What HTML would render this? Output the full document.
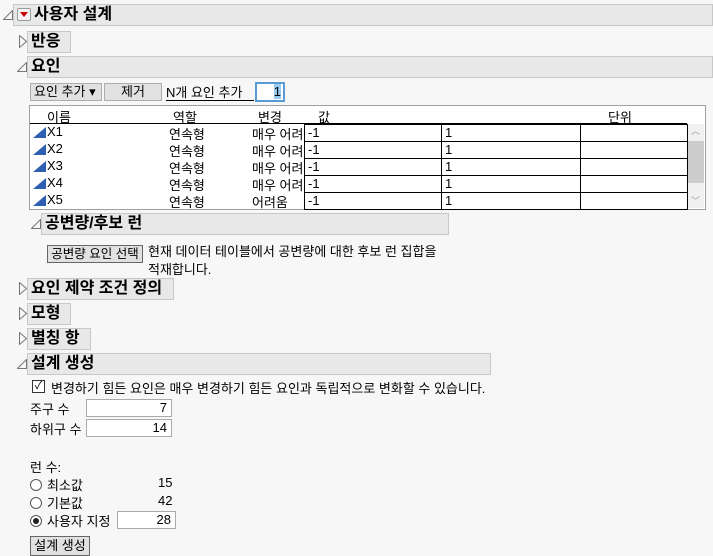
<!DOCTYPE html>
<html><head><meta charset="utf-8"><style>
*{margin:0;padding:0;box-sizing:border-box}
body{width:713px;height:556px;background:#f7f7f7;font-family:"Liberation Sans","Noto Sans CJK KR","NanumGothic",sans-serif;font-size:13px;color:#000;position:relative;overflow:hidden}
.a{position:absolute;white-space:nowrap}
.bar{position:absolute;background:#e8e8e8;border:1px solid #c8c8c8;font-weight:bold;font-size:16px;padding-left:3px;line-height:19px}
.tri{position:absolute}
.btn{position:absolute;background:#e1e1e1;border:1px solid #adadad;text-align:center;line-height:16px}
.inp{position:absolute;background:#fff;border:1px solid #aaa;text-align:right;padding-right:4px;line-height:15px}
.row{position:absolute;left:30px;width:657px;height:17px}
.cell{position:absolute;top:0;height:18px;border:1px solid #000;background:#fff;padding-left:3px;line-height:16px}
.radio{position:absolute;width:12px;height:12px;border:1px solid #555;border-radius:50%;background:#fff}
</style></head><body>
<svg class="tri" style="left:3px;top:10px" width="10" height="10"><polygon points="0.5,9.5 9.5,9.5 9.5,0.5" fill="none" stroke="#777"/></svg>
<div class="bar" style="left:13px;top:4px;width:700px;height:22px;padding-left:20px">사용자 설계</div>
<div class="a" style="left:17px;top:8px;width:14px;height:13px;border:1px solid #999;background:#f4f4f4;border-radius:2px"></div>
<div class="a" style="left:20px;top:12px;width:0;height:0;border-left:4px solid transparent;border-right:4px solid transparent;border-top:5px solid #c00"></div>

<svg class="tri" style="left:19px;top:35px" width="8" height="13"><polygon points="0.5,0.5 7.5,6.5 0.5,12.5" fill="none" stroke="#777"/></svg>
<div class="bar" style="left:27px;top:31px;width:44px;height:22px">반응</div>

<svg class="tri" style="left:17px;top:62px" width="10" height="10"><polygon points="0.5,9.5 9.5,9.5 9.5,0.5" fill="none" stroke="#777"/></svg>
<div class="bar" style="left:27px;top:56px;width:686px;height:22px">요인</div>

<div class="btn" style="left:30px;top:83px;width:72px;height:18px;text-align:left;padding-left:3px">요인 추가 ▾</div>
<div class="btn" style="left:104px;top:83px;width:58px;height:18px">제거</div>
<div class="a" style="left:166px;top:85px;width:88px;border-bottom:1px solid #000;line-height:15px">N개 요인 추가</div>
<div class="a" style="left:255px;top:82px;width:30px;height:20px;border:2px solid #5b9bd5;background:#fff;text-align:right;padding-right:2px;line-height:16px"><span style="background:#99c9ef">1</span></div>

<div class="a" style="left:29px;top:105px;width:677px;height:105px;border:1px solid #a0a0a0;background:#fff"></div>
<div class="a" style="left:30px;top:123px;width:657px;height:1px;background:#000"></div>
<div class="a" style="left:47px;top:107px">이름</div>
<div class="a" style="left:173px;top:107px">역할</div>
<div class="a" style="left:258px;top:107px">변경</div>
<div class="a" style="left:318px;top:107px">값</div>
<div class="a" style="left:608px;top:107px">단위</div>
<div class="a" style="left:687px;top:124px;width:17px;height:84px;background:#f0f0f0"></div>
<div class="a" style="left:688px;top:141px;width:16px;height:42px;background:#cdcdcd"></div>
<div class="a" style="left:691px;top:124px;font-size:9px;color:#999">︿</div>
<div class="a" style="left:691px;top:194px;font-size:9px;color:#999">﹀</div>

<div class="row" style="top:124px"><svg class="a" style="left:3px;top:3px" width="13" height="11"><polygon points="0,11 13,0 13,11" fill="#2f5fb0"/></svg><span class="a" style="left:17px;top:0px">X1</span><span class="a" style="left:139px;top:0px">연속형</span><span class="a" style="left:222px;top:0px">매우 어려</span><div class="cell" style="left:274px;width:138px">-1</div><div class="cell" style="left:411px;width:140px">1</div><div class="cell" style="left:550px;width:108px"></div></div>
<div class="row" style="top:141px"><svg class="a" style="left:3px;top:3px" width="13" height="11"><polygon points="0,11 13,0 13,11" fill="#2f5fb0"/></svg><span class="a" style="left:17px;top:0px">X2</span><span class="a" style="left:139px;top:0px">연속형</span><span class="a" style="left:222px;top:0px">매우 어려</span><div class="cell" style="left:274px;width:138px">-1</div><div class="cell" style="left:411px;width:140px">1</div><div class="cell" style="left:550px;width:108px"></div></div>
<div class="row" style="top:158px"><svg class="a" style="left:3px;top:3px" width="13" height="11"><polygon points="0,11 13,0 13,11" fill="#2f5fb0"/></svg><span class="a" style="left:17px;top:0px">X3</span><span class="a" style="left:139px;top:0px">연속형</span><span class="a" style="left:222px;top:0px">매우 어려</span><div class="cell" style="left:274px;width:138px">-1</div><div class="cell" style="left:411px;width:140px">1</div><div class="cell" style="left:550px;width:108px"></div></div>
<div class="row" style="top:175px"><svg class="a" style="left:3px;top:3px" width="13" height="11"><polygon points="0,11 13,0 13,11" fill="#2f5fb0"/></svg><span class="a" style="left:17px;top:0px">X4</span><span class="a" style="left:139px;top:0px">연속형</span><span class="a" style="left:222px;top:0px">매우 어려</span><div class="cell" style="left:274px;width:138px">-1</div><div class="cell" style="left:411px;width:140px">1</div><div class="cell" style="left:550px;width:108px"></div></div>
<div class="row" style="top:192px"><svg class="a" style="left:3px;top:3px" width="13" height="11"><polygon points="0,11 13,0 13,11" fill="#2f5fb0"/></svg><span class="a" style="left:17px;top:0px">X5</span><span class="a" style="left:139px;top:0px">연속형</span><span class="a" style="left:222px;top:0px">어려움</span><div class="cell" style="left:274px;width:138px">-1</div><div class="cell" style="left:411px;width:140px">1</div><div class="cell" style="left:550px;width:108px"></div></div>

<svg class="tri" style="left:31px;top:219px" width="10" height="10"><polygon points="0.5,9.5 9.5,9.5 9.5,0.5" fill="none" stroke="#777"/></svg>
<div class="bar" style="left:41px;top:213px;width:408px;height:22px">공변량/후보 런</div>
<div class="btn" style="left:47px;top:245px;width:96px;height:18px;border-color:#666;font-size:12.5px">공변량 요인 선택</div>
<div class="a" style="left:148px;top:243px;line-height:18px">현재 데이터 테이블에서 공변량에 대한 후보 런 집합을<br>적재합니다.</div>

<svg class="tri" style="left:19px;top:282px" width="8" height="13"><polygon points="0.5,0.5 7.5,6.5 0.5,12.5" fill="none" stroke="#777"/></svg>
<div class="bar" style="left:27px;top:278px;width:147px;height:22px">요인 제약 조건 정의</div>
<svg class="tri" style="left:19px;top:307px" width="8" height="13"><polygon points="0.5,0.5 7.5,6.5 0.5,12.5" fill="none" stroke="#777"/></svg>
<div class="bar" style="left:27px;top:303px;width:44px;height:22px">모형</div>
<svg class="tri" style="left:19px;top:332px" width="8" height="13"><polygon points="0.5,0.5 7.5,6.5 0.5,12.5" fill="none" stroke="#777"/></svg>
<div class="bar" style="left:27px;top:328px;width:64px;height:22px">별칭 항</div>
<svg class="tri" style="left:17px;top:359px" width="10" height="10"><polygon points="0.5,9.5 9.5,9.5 9.5,0.5" fill="none" stroke="#777"/></svg>
<div class="bar" style="left:27px;top:353px;width:464px;height:22px">설계 생성</div>

<div class="a" style="left:32px;top:380px;width:13px;height:13px;border:1px solid #333;background:#fff;font-size:11px;line-height:11px;text-align:center">✓</div>
<div class="a" style="left:51px;top:378px">변경하기 힘든 요인은 매우 변경하기 힘든 요인과 독립적으로 변화할 수 있습니다.</div>
<div class="a" style="left:30px;top:399px">주구 수</div>
<div class="inp" style="left:86px;top:399px;width:86px;height:18px">7</div>
<div class="a" style="left:30px;top:419px">하위구 수</div>
<div class="inp" style="left:86px;top:419px;width:86px;height:18px">14</div>
<div class="a" style="left:30px;top:457px">런 수:</div>
<div class="radio" style="left:30px;top:479px"></div><div class="a" style="left:47px;top:475px">최소값</div><div class="a" style="left:158px;top:475px">15</div>
<div class="radio" style="left:30px;top:497px"></div><div class="a" style="left:47px;top:493px">기본값</div><div class="a" style="left:158px;top:493px">42</div>
<div class="radio" style="left:30px;top:515px"></div><div class="a" style="left:33px;top:518px;width:6px;height:6px;border-radius:50%;background:#222"></div><div class="a" style="left:47px;top:511px">사용자 지정</div>
<div class="inp" style="left:117px;top:511px;width:59px;height:18px">28</div>
<div class="btn" style="left:30px;top:536px;width:60px;height:20px;border-color:#666;line-height:18px">설계 생성</div>
</body></html>
